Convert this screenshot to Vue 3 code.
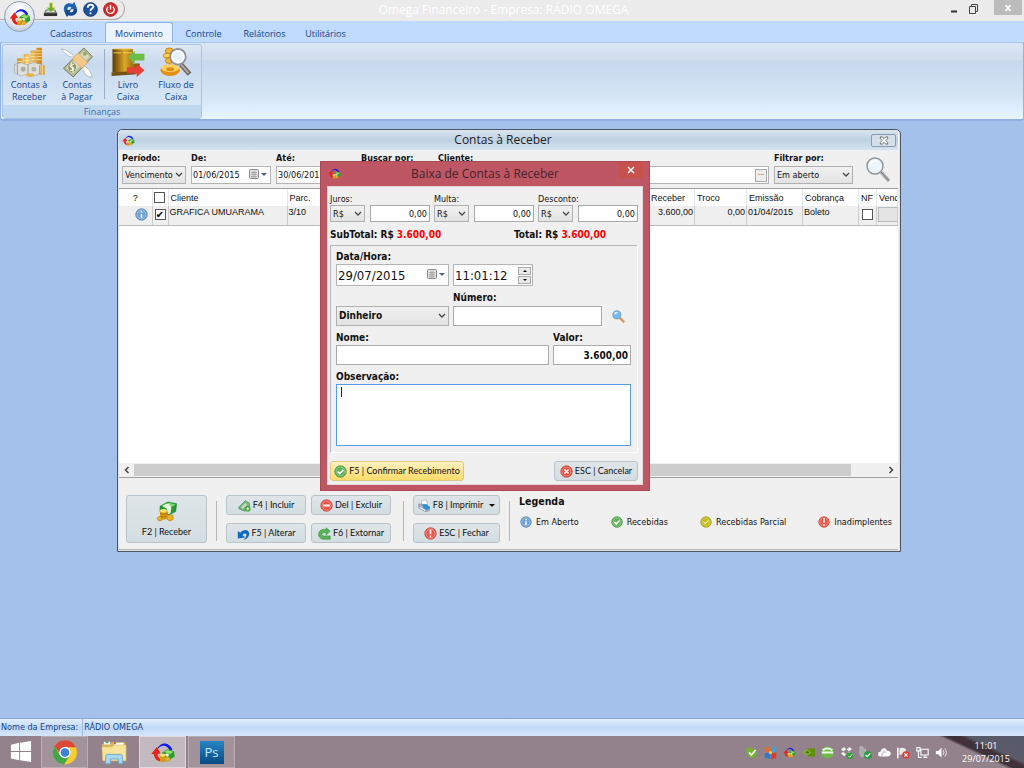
<script setup>
import { ref } from 'vue'

const tabs = ['Cadastros', 'Movimento', 'Controle', 'Relátorios', 'Utilitários']
const quick = [
  { icon: 'i-save', label: 'Salvar' },
  { icon: 'i-refresh', label: 'Atualizar' },
  { icon: 'i-help', label: 'Ajuda' },
  { icon: 'i-power', label: 'Sair' },
]
const tools = [
  { icon: 'i-coins', top: 'Contas à', bottom: 'Receber' },
  { icon: 'i-money', top: 'Contas', bottom: 'à Pagar' },
  { icon: 'i-book', top: 'Livro', bottom: 'Caixa' },
  { icon: 'i-flow', top: 'Fluxo de', bottom: 'Caixa' },
]
const legend = [
  { icon: 'i-info', label: 'Em Aberto' },
  { icon: 'i-ok', label: 'Recebidas' },
  { icon: 'i-part', label: 'Recebidas Parcial' },
  { icon: 'i-warn', label: 'Inadimplentes' },
]
const charges = ['Juros', 'Multa', 'Desconto']
const tray = ['t-shield', 't-win', 'i-logo', 't-nvidia', 't-globe', 't-dropbox', 't-usb', 't-cloud', 't-flag', 't-net', 't-sound']
const allRows = ref(false)
const rowOn = ref(true)
const note = ref('')
</script>

<template>
  <div class="screen">
    <svg class="defs" aria-hidden="true">
      <defs>
        <linearGradient id="gold" x1="0" x2="1"><stop offset="0" stop-color="#e98b0c" /><stop offset=".45" stop-color="#ffd667" /><stop offset="1" stop-color="#d57a08" /></linearGradient>
        <linearGradient id="brown" x1="0" x2="1"><stop offset="0" stop-color="#5d3a03" /><stop offset=".45" stop-color="#e0a828" /><stop offset="1" stop-color="#6b4505" /></linearGradient>
      </defs>
      <symbol id="i-logo" viewBox="0 0 32 32">
        <path d="M8 13C11 3 23 1 28 12l-3 2C21 6 14 5 8 13z" fill="#1420e0" />
        <path d="M1 18L8 9l5 8-4 1c0 4 3 7 9 9-8 2-13-2-14-9z" fill="#e8211b" />
        <path d="M15 16l6-4 9 2 1 7-6 4-10-3z" fill="#2f9f28" />
        <path d="M17 15l5-2 7 2-4 3z" fill="#94e070" /><path d="M18 19l3-2 3 2-2 3z" fill="#e9f7da" />
        <path d="M12 19q4-3 7 0v8q-4 3-7 0z" fill="#d49d1c" /><ellipse cx="15.500" cy="19.500" rx="3.500" ry="1.800" fill="#ffe47a" />
        <path d="M18 23q4-3 7 0v3q-4 3-7 0z" fill="#e3b12d" stroke="#a97b12" stroke-width=".5" />
      </symbol>
      <symbol id="i-save" viewBox="0 0 16 16">
        <path d="M3 8h10l2 4v3H1v-3z" fill="#777" /><path d="M1 12h14v3H1z" fill="#333" /><path d="M4 9h8l1 2H3z" fill="#ddd" />
        <path d="M7 1h3v5h3L8.500 11 4 6h3z" fill="#5fb32a" stroke="#e3d34a" stroke-width=".6" />
      </symbol>
      <symbol id="i-refresh" viewBox="0 0 16 16">
        <path d="M1 9C0 3 5 0 10 2l2-2 3 7-8 1 2-2C7 4 4 5 5 9z" fill="#1d62ae" />
        <path d="M15 7c1 6-4 9-9 7l-2 2-3-7 8-1-2 2c2 2 5 1 4-3z" fill="#164b8c" />
      </symbol>
      <symbol id="i-help" viewBox="0 0 16 16">
        <circle cx="8" cy="8" r="7.300" fill="#1c519b" stroke="#0d3370" /><path d="M5 6c0-4 6-4 6-1 0 2-3 2-3 4.500" fill="none" stroke="#fff" stroke-width="2" /><circle cx="8" cy="12" r="1.200" fill="#fff" />
      </symbol>
      <symbol id="i-power" viewBox="0 0 16 16">
        <circle cx="8" cy="8" r="7.300" fill="#d92a2a" stroke="#a11616" /><path d="M5.500 5a4 4 0 1 0 5 0M8 3v5" fill="none" stroke="#fff" stroke-width="1.500" />
      </symbol>
      <symbol id="i-coins" viewBox="0 0 32 32">
        <path d="M4 12h5v14H4zM11 8h5v18h-5zM18 4h5v22h-5zM24 1h5v25h-5z" fill="url(#gold)" stroke="#d68616" stroke-width=".5" />
        <path d="M4 15h5M4 18h5M11 11h5M11 14h5M11 17h5M18 7h5M18 10h5M18 13h5M18 16h5M24 4h5M24 7h5M24 10h5M24 13h5" stroke="#fff0a6" stroke-width=".8" />
        <path d="M1 18l7-2 6 2 7-2 8 2v9l-8 3-7-2-6 2-7-3z" fill="#dededb" stroke="#999" stroke-width=".6" />
        <circle cx="10" cy="23" r="2.500" fill="#aaaaa7" /><circle cx="21" cy="23" r="2.500" fill="#b0b0ac" /><path d="M4 18v10M15 18v10M27 19v9" stroke="#999" />
        <ellipse cx="17" cy="29" rx="4" ry="2" fill="#e9b13c" /><path d="M28 19h4v10h-4z" fill="url(#gold)" />
      </symbol>
      <symbol id="i-money" viewBox="0 0 32 32">
        <path d="M12 8C8 7 6 2 0 2c2 2 2 4 5 5-1 1 2 2 5 3" fill="#fff" stroke="#a8adb5" stroke-width=".8" />
        <path d="M23 20c5 1 6 4 9 11-4 0-8-1-9-7" fill="#fff" stroke="#a8adb5" stroke-width=".8" />
        <path d="M2 22L23 1l9 9-20 21z" fill="#b7bd96" stroke="#767b5c" />
        <path d="M5 22L23 4l6 6-17 17z" fill="#d8dbbf" /><path d="M11 12l6-6 10 10-6 6z" fill="#f2c98b" stroke="#d39a55" stroke-width=".6" />
        <ellipse cx="11" cy="21" rx="4" ry="5" fill="#8b9369" /><path d="M13 18c-5-1-5 3-2 3s2 4-2 3M10 16l2 10" fill="none" stroke="#f5f4db" stroke-width="1.200" /><circle cx="24" cy="7" r="2" fill="#90ad5f" />
      </symbol>
      <symbol id="i-book" viewBox="0 0 36 32">
        <path d="M2 2h10v24H2zM12 2h11v24H12zM22 17h8v10h-8z" fill="url(#brown)" />
        <path d="M1 26l22-1 4 3-26 2z" fill="#745012" /><path d="M3 2h19M3 6h8M13 6h9" stroke="#f2ce5b" />
        <path d="M18 10l7-6v3h10v7H25v4z" fill="#6bbd48" /><path d="M17 21h10v-4l8 7-8 7v-4H17z" fill="#e64038" />
      </symbol>
      <symbol id="i-flow" viewBox="0 0 32 32">
        <ellipse cx="9" cy="4" rx="4" ry="3" fill="#f3b73a" stroke="#c97f0c" /><ellipse cx="7" cy="9" rx="4" ry="2.500" fill="#ffd25a" stroke="#c97f0c" /><ellipse cx="9" cy="14" rx="4" ry="3" fill="#f3b73a" stroke="#c97f0c" />
        <ellipse cx="10" cy="24" rx="10" ry="6" fill="#e48e0c" /><ellipse cx="10" cy="22" rx="9" ry="4" fill="#ffd05a" /><ellipse cx="10" cy="23" rx="4" ry="2" fill="#dc8b14" />
        <path d="M21 18l9 10" stroke="#6f645f" stroke-width="5" /><path d="M21 18l8 9" stroke="#b6aaa1" stroke-width="2" />
        <circle cx="18" cy="10" r="8" fill="#e9f1f8" stroke="#8f8f91" stroke-width="2" /><circle cx="18" cy="10" r="6" fill="none" stroke="#fff" stroke-width="2" />
      </symbol>
      <symbol id="i-info" viewBox="0 0 16 16"><circle cx="8" cy="8" r="7" fill="#71a1d2" stroke="#4479b3" /><circle cx="8" cy="8" r="5.500" fill="none" stroke="#a8c8e8" /><path d="M8 4v1.500M8 7v5" stroke="#fff" stroke-width="2" /></symbol>
      <symbol id="i-ok" viewBox="0 0 16 16"><circle cx="8" cy="8" r="7" fill="#5db159" stroke="#348c35" /><circle cx="8" cy="8" r="5.500" fill="none" stroke="#9bd497" /><path d="M4.500 8l2.500 2.500L11.500 6" fill="none" stroke="#fff" stroke-width="2" /></symbol>
      <symbol id="i-part" viewBox="0 0 16 16"><circle cx="8" cy="8" r="7" fill="#c3bd20" stroke="#96921b" /><circle cx="8" cy="8" r="5.500" fill="none" stroke="#d8d255" /><path d="M4.500 8l2.500 2L11.500 6" fill="none" stroke="#f5f0b0" stroke-width="1.500" /></symbol>
      <symbol id="i-warn" viewBox="0 0 16 16"><circle cx="8" cy="8" r="7" fill="#ec5548" stroke="#d1392f" /><circle cx="8" cy="8" r="5.500" fill="none" stroke="#f79b90" /><path d="M8 3v6M8 10.500v2" stroke="#fff" stroke-width="2" /></symbol>
      <symbol id="i-cancel" viewBox="0 0 16 16"><circle cx="8" cy="8" r="7" fill="#e65346" stroke="#c8372e" /><circle cx="8" cy="8" r="5.500" fill="none" stroke="#f49187" /><path d="M5.500 5.500l5 5M10.500 5.500l-5 5" stroke="#fff" stroke-width="2" /></symbol>
      <symbol id="i-minus" viewBox="0 0 16 16"><circle cx="8" cy="8" r="7" fill="#e8564b" stroke="#cc3930" /><circle cx="8" cy="8" r="5.500" fill="none" stroke="#f49187" /><path d="M4 8h8" stroke="#fff" stroke-width="2.500" /></symbol>
      <symbol id="i-add" viewBox="0 0 16 16"><path d="M1 10l8-8 5 3v7l-6 3-7-3z" fill="#81b583" stroke="#579560" /><path d="M4 10l5-5 2 2-5 5z" fill="#c7dfc1" /><circle cx="12" cy="12" r="3.500" fill="#43a641" /><path d="M12 10v4M10 12h4" stroke="#fff" /></symbol>
      <symbol id="i-undo" viewBox="0 0 16 16"><path d="M1 5l3 2C8 2 15 3 15 8c0 4-3 7-7 8 4-4 5-8 2-8-2 0-3 1-3 2l3 3-9 1z" fill="#1268c1" /></symbol>
      <symbol id="i-redo" viewBox="0 0 16 16"><path d="M15 5L10 1v2H6C-1 4-1 14 6 15h9v-4H7c-3 0-3-4 0-4h3v3z" fill="#58b557" stroke="#34893b" stroke-width=".7" /></symbol>
      <symbol id="i-print" viewBox="0 0 16 16"><path d="M4 2l6-1 2 6-7 2z" fill="#fff" stroke="#9ba4ad" stroke-width=".7" /><path d="M1 6l8 1 5 3v4l-4 2-9-5z" fill="#adb8c3" stroke="#6d7984" stroke-width=".7" /><path d="M5 7l5-1 5 4-2 3-5 1z" fill="#2e8fda" /><path d="M2 10l7 3v2l-7-4z" fill="#f7f7f7" /></symbol>
      <symbol id="i-cash" viewBox="0 0 24 24"><path d="M4 6l9-5 10 2-1 9-8 4-10-3z" fill="#219b33" stroke="#18742a" stroke-width=".6" /><path d="M6 5l8-3 8 2-7 4z" fill="#81db70" /><path d="M11 3l4 1 2 4-1 6-3 1-1-6-5-3z" fill="#e7f6da" /><path d="M4 11v9q4 3 8 0v-9q-4 3-8 0" fill="#d79814" /><ellipse cx="8" cy="11" rx="4" ry="2" fill="#ffe16b" /><path d="M4 14q4 3 8 0M4 17q4 3 8 0" fill="none" stroke="#8b5c05" stroke-width=".6" /><path d="M1 19q2-3 5 0v3q-3 2-5-1zM12 17q5-3 7 0v4q-4 3-7 0z" fill="#eab12a" stroke="#a77008" stroke-width=".6" /></symbol>
      <symbol id="i-lens" viewBox="0 0 28 28"><circle cx="11" cy="10" r="8" fill="#edf5fb" stroke="#8c949b" stroke-width="1.500" /><path d="M6 9q2-5 7-4" fill="none" stroke="#fff" stroke-width="2" /><path d="M17 16l8 9" stroke="#b2b2b2" stroke-width="3.500" /><path d="M17 16l8 9" stroke="#777" stroke-width="1" /></symbol>
      <symbol id="i-find" viewBox="0 0 16 16"><path d="M9 9l6 6" stroke="#d79a63" stroke-width="3" /><circle cx="6" cy="6" r="5" fill="#74bbef" stroke="#789ab4" /><path d="M3 5q1-2 4-2" stroke="#e7f6ff" fill="none" stroke-width="2" /></symbol>
      <symbol id="i-cal" viewBox="0 0 18 12"><rect x=".5" y=".5" width="9" height="9" rx="1" fill="#e2e2e6" stroke="#888" /><path d="M2 3.500h6M2 5.500h6M2 7.500h6M4 2v7M6 2v7" stroke="#999" stroke-width=".7" /><path d="M12 4h6l-3 3z" fill="#4c6587" /></symbol>
      <symbol id="b-win" viewBox="0 0 24 24"><path d="M1 4l9-2v9H1zM11 2l12-2v11H11zM1 12h9v9l-9-2zM11 12h12v11l-12-2z" fill="#fff" /></symbol>
      <symbol id="b-chrome" viewBox="0 0 24 24"><circle cx="12" cy="12" r="11.500" fill="#f6cc31" /><path d="M2 6A11.500 11.500 0 0 1 22.500 7H12l-5 6z" fill="#dc4638" /><path d="M2 6a11.500 11.500 0 0 0 9 17.500l6-9-10 0z" fill="#41a549" /><circle cx="12" cy="12" r="5.500" fill="#fff" /><circle cx="12" cy="12" r="4.200" fill="#3f82d5" /></symbol>
      <symbol id="b-folder" viewBox="0 0 28 26"><path d="M1 4h9l2-2h14v20H2z" fill="#d8b85f" /><path d="M3 3h7M14 4h10" stroke="#fff" stroke-width="3" /><path d="M5 2h3" stroke="#3caf42" stroke-width="2" /><path d="M14 3h2" stroke="#d74a34" stroke-width="2" /><path d="M1 7h11l2-2h13v17H2z" fill="#f8e49a" stroke="#d8b968" stroke-width=".6" /><path d="M5 25v-8q0-2 2-2h14q2 0 2 2v8h-4v-5h-9v5z" fill="#a9d8f4" stroke="#6ca9d0" /></symbol>
      <symbol id="t-shield" viewBox="0 0 16 16"><path d="M2 2h6v2h6v8l-4 3-5-2-3-4z" fill="#71b629" /><path d="M5 8l3 3 5-6" fill="none" stroke="#fff" stroke-width="2" /></symbol>
      <symbol id="t-win" viewBox="0 0 16 16"><path d="M1 1l7 1v6L1 7z" fill="#e86a2b" /><path d="M9 2l6-1v6l-6 1z" fill="#479bd9" /><path d="M1 9l7-1v8l-7-2z" fill="#2a7dcc" /><path d="M9 9l6-1v7l-6 1z" fill="#e23c25" /><circle cx="8" cy="8" r="2" fill="#f1cf37" /></symbol>
      <symbol id="t-nvidia" viewBox="0 0 16 16"><path d="M7 3h9v10H7z" fill="#5c9300" /><path d="M0 8q6-6 12 0-6 6-12 0" fill="#80ad32" /><path d="M4 8q3-3 5 0-3 2-5 0" fill="#456f08" /></symbol>
      <symbol id="t-globe" viewBox="0 0 16 16"><circle cx="8" cy="8" r="7.500" fill="#6ebc48" /><path d="M1 8h14M2 5q6-4 12 0" stroke="#effbea" stroke-width="2.500" fill="none" /></symbol>
      <symbol id="t-dropbox" viewBox="0 0 16 16"><path d="M1 4l4-3 3 3-4 3zM8 4l4-3 3 3-4 3zM1 9l3-2 4 3-3 3zM8 10l3-3 4 3-3 3z" fill="#f5f5f5" stroke="#777" stroke-width=".5" /><circle cx="12" cy="12" r="4" fill="#2e9e35" /><path d="M10 12l2 2 3-4" fill="none" stroke="#fff" /></symbol>
      <symbol id="t-usb" viewBox="0 0 16 16"><path d="M1 1h4v3h3v6l-3 3H3L1 10z" fill="#a9a9a9" stroke="#ddd" stroke-width=".6" /><circle cx="11" cy="11" r="4.800" fill="#269c40" /><path d="M8 11l2 2 4-4" fill="none" stroke="#fff" stroke-width="1.500" /></symbol>
      <symbol id="t-cloud" viewBox="0 0 16 16"><path d="M3 13a3 3 0 0 1 0-6C4 2 10 1 11 6c6-1 6 7 1 7z" fill="#fff" /><path d="M5 12c-1-4 3-6 5-4" fill="none" stroke="#94848c" /></symbol>
      <symbol id="t-flag" viewBox="0 0 16 16"><path d="M1 2v13" stroke="#fff" stroke-width="2" /><path d="M3 3q5-2 8 1v7q-4-2-8 0z" fill="#e8e8e8" /><circle cx="11" cy="11" r="4.500" fill="#df3c32" /><path d="M9 9l4 4M13 9l-4 4" stroke="#fff" stroke-width="1.500" /></symbol>
      <symbol id="t-net" viewBox="0 0 16 16"><path d="M6 4h9v7H6zM9 14h5M11 11v3M1 2h4v4H1zM3 6v8h4" fill="none" stroke="#fff" stroke-width="1.300" /></symbol>
      <symbol id="t-sound" viewBox="0 0 16 16"><path d="M1 6h3l4-4v12l-4-4H1z" fill="#fff" /><path d="M10 5q2 3 0 6M12 3q4 5 0 10" fill="none" stroke="#fff" /></symbol>
    </svg>

    <header class="ribbon">
      <div class="titlebar">
        <div class="quick">
          <button v-for="q in quick" :key="q.icon" :aria-label="q.label"><svg><use :href="'#' + q.icon" /></svg></button>
        </div>
        <h1>Omega Financeiro - Empresa: RÁDIO OMEGA</h1>
        <div class="caption">
          <button aria-label="Minimizar"><svg viewBox="0 0 12 12"><path d="M3 8.500h6" stroke="#333" stroke-width="2" /></svg></button>
          <button aria-label="Restaurar"><svg viewBox="0 0 12 12"><path d="M3.500 3V1.500h6v7H8M1.500 3.500h6v7h-6z" fill="none" stroke="#444" /></svg></button>
          <button class="x" aria-label="Fechar">x</button>
        </div>
      </div>
      <button class="orb" aria-label="Menu principal"><svg><use href="#i-logo" /></svg></button>
      <nav class="tabs">
        <a v-for="(t, i) in tabs" :key="t" href="#" :class="{ on: i === 1 }">{{ t }}</a>
      </nav>
      <div class="band">
        <section class="group">
          <div class="tools">
            <button v-for="t in tools" :key="t.icon">
              <svg><use :href="'#' + t.icon" /></svg>
              <span>{{ t.top }}</span><span>{{ t.bottom }}</span>
            </button>
          </div>
          <h2>Finanças</h2>
        </section>
      </div>
    </header>

    <main class="desktop">
      <section class="win">
        <div class="wintitle">
          <svg><use href="#i-logo" /></svg>
          <h2>Contas à Receber</h2>
          <button aria-label="Fechar janela"><svg viewBox="0 0 12 10"><path d="M2 1h2l2 2 2-2h2v2L8 5l2 2v2H8L6 7 4 9H2V7l2-2-2-2z" fill="#fff" stroke="#555" stroke-width=".9" /></svg></button>
        </div>
        <form class="filters" @submit.prevent>
          <div class="f period"><label for="per">Período:</label>
            <span class="sel"><select id="per"><option>Vencimento</option></select><svg viewBox="0 0 8 6"><path d="M1 1l3 3 3-3" /></svg></span></div>
          <div class="f date"><label for="de">De:</label>
            <span class="dt"><input id="de" value="01/06/2015"><svg><use href="#i-cal" /></svg></span></div>
          <div class="f date"><label for="ate">Até:</label>
            <span class="dt"><input id="ate" value="30/06/2015"><svg><use href="#i-cal" /></svg></span></div>
          <div class="f by"><label for="por">Buscar por:</label>
            <span class="sel"><select id="por"><option>Cliente</option></select></span></div>
          <div class="f client"><label for="cli">Cliente:</label>
            <span class="dt"><input id="cli"><button type="button" aria-label="Procurar cliente">···</button></span></div>
          <div class="f situation"><label for="fil">Filtrar por:</label>
            <span class="sel"><select id="fil"><option>Em aberto</option></select><svg viewBox="0 0 8 6"><path d="M1 1l3 3 3-3" /></svg></span></div>
          <button class="lens" aria-label="Pesquisar"><svg><use href="#i-lens" /></svg></button>
        </form>

        <div class="gridbox">
          <table>
            <colgroup><col class="c33"><col class="c16"><col class="c119"><col class="c46"><col><col class="c46"><col class="c52"><col class="c56"><col class="c56"><col class="c18"><col class="c21"></colgroup>
            <thead><tr>
              <th class="mid">?</th><th><input v-model="allRows" type="checkbox" aria-label="Selecionar todos"></th><th>Cliente</th><th>Parc.</th><th></th>
              <th>Receber</th><th>Troco</th><th>Emissão</th><th>Cobrança</th><th>NF</th><th>Vend</th>
            </tr></thead>
            <tbody><tr>
              <td class="info"><svg><use href="#i-info" /></svg></td><td><input v-model="rowOn" type="checkbox" aria-label="Selecionar linha"></td><td>GRAFICA UMUARAMA</td><td>3/10</td><td></td>
              <td class="num">3.600,00</td><td class="num">0,00</td><td>01/04/2015</td><td>Boleto</td><td><input type="checkbox" aria-label="NF"></td><td><button class="cell" aria-label="Vendedor"></button></td>
            </tr></tbody>
          </table>
          <div class="scroll">
            <button aria-label="Rolar à esquerda"><svg viewBox="0 0 8 8"><path d="M5.500 1L2.500 4l3 3" /></svg></button>
            <i></i>
            <button aria-label="Rolar à direita"><svg viewBox="0 0 8 8"><path d="M2.500 1l3 3-3 3" /></svg></button>
          </div>
        </div>

        <footer class="actions">
          <button class="btn big"><svg><use href="#i-cash" /></svg>F2 | Receber</button>
          <i class="sep"></i>
          <div class="pairs">
            <button class="btn"><svg><use href="#i-add" /></svg>F4 | Incluir</button>
            <button class="btn"><svg><use href="#i-minus" /></svg>Del | Excluir</button>
            <button class="btn"><svg><use href="#i-undo" /></svg>F5 | Alterar</button>
            <button class="btn"><svg><use href="#i-redo" /></svg>F6 | Extornar</button>
          </div>
          <i class="sep wide"></i>
          <div class="pairs one">
            <button class="btn"><svg><use href="#i-print" /></svg>F8 | Imprimir <b class="drop"></b></button>
            <button class="btn"><svg><use href="#i-warn" /></svg>ESC | Fechar</button>
          </div>
          <i class="sep"></i>
          <section class="legend">
            <h3>Legenda</h3>
            <ul><li v-for="l in legend" :key="l.icon"><svg><use :href="'#' + l.icon" /></svg>{{ l.label }}</li></ul>
          </section>
        </footer>
      </section>

      <section class="dialog" role="dialog" aria-labelledby="dt">
        <div class="dtitle">
          <svg><use href="#i-logo" /></svg>
          <h2 id="dt">Baixa de Contas à Receber</h2>
          <button aria-label="Fechar diálogo"><svg viewBox="0 0 8 8"><path d="M1 1l6 6M7 1L1 7" stroke="#fff" stroke-width="1.500" /></svg></button>
        </div>
        <form class="dbody" @submit.prevent>
          <div class="charges">
            <div v-for="c in charges" :key="c" class="charge">
              <label :for="c">{{ c }}:</label>
              <span class="sel"><select :aria-label="c + ' em'"><option>R$</option></select><svg viewBox="0 0 8 6"><path d="M1 1l3 3 3-3" /></svg></span>
              <input :id="c" class="box" value="0,00">
            </div>
          </div>
          <div class="totals"><p>SubTotal: R$ <em>3.600,00</em></p><p>Total: R$ <em>3.600,00</em></p></div>
          <div class="panel">
            <label for="data">Data/Hora:</label>
            <div class="line">
              <span class="dt when w113"><input id="data" value="29/07/2015"><svg><use href="#i-cal" /></svg></span>
              <span class="dt when w80"><input aria-label="Hora" value="11:01:12">
                <span class="spin"><button type="button" aria-label="Mais"><svg viewBox="0 0 6 4"><path d="M1 3h4L3 1z" /></svg></button><button type="button" aria-label="Menos"><svg viewBox="0 0 6 4"><path d="M1 1h4L3 3z" /></svg></button></span></span>
            </div>
            <div class="line numrow">
              <span class="sel pay w113"><select aria-label="Forma de pagamento"><option>Dinheiro</option></select><svg viewBox="0 0 8 6"><path d="M1 1l3 3 3-3" /></svg></span>
              <div class="w149"><label for="num">Número:</label><input id="num" class="box"></div>
              <button type="button" class="find" aria-label="Localizar"><svg><use href="#i-find" /></svg></button>
            </div>
            <div class="line names">
              <div class="grow"><label for="nome">Nome:</label><input id="nome" class="box"></div>
              <div class="w78"><label for="valor">Valor:</label><input id="valor" class="box val" value="3.600,00"></div>
            </div>
            <label for="obs">Observação:</label>
            <div class="note"><textarea id="obs" v-model="note"></textarea><i></i></div>
          </div>
          <div class="dbuttons">
            <button class="btn gold"><svg><use href="#i-ok" /></svg>F5 | Confirmar Recebimento</button>
            <button type="button" class="btn"><svg><use href="#i-cancel" /></svg>ESC | Cancelar</button>
          </div>
        </form>
      </section>
    </main>

    <div class="statusbar"><span>Nome da Empresa:</span><span>RÁDIO OMEGA</span></div>

    <footer class="taskbar">
      <button class="start" aria-label="Iniciar"><svg><use href="#b-win" /></svg></button>
      <button class="task open" aria-label="Chrome"><svg><use href="#b-chrome" /></svg></button>
      <button class="task" aria-label="Arquivos"><svg><use href="#b-folder" /></svg></button>
      <button class="task open on" aria-label="Omega"><svg><use href="#i-logo" /></svg></button>
      <button class="task open" aria-label="Photoshop"><span class="ps">Ps</span></button>
      <div class="tray"><svg v-for="t in tray" :key="t"><use :href="'#' + t" /></svg></div>
      <div class="clock"><span>11:01</span><span>29/07/2015</span></div>
    </footer>
  </div>
</template>

<style>
body { margin: 0; }
</style>

<style scoped>
.screen { --ui: "Open Sans", "Noto Sans", sans-serif; --tah: "DejaVu Sans Condensed", "DejaVu Sans", sans-serif; --ms: "Liberation Sans", sans-serif; display: flex; flex-direction: column; min-height: 100vh; font: 9px/12px var(--tah); color: #111; background: #a3c1ea; overflow: hidden; }
.screen * { box-sizing: border-box; }
.defs { position: absolute; width: 0; height: 0; }
button, input, select, textarea { font: inherit; color: inherit; margin: 0; padding: 0; border: 0; background: none; border-radius: 0; outline: 0; }
h1, h2, h3, p, ul { margin: 0; padding: 0; font-weight: inherit; list-style: none; }
svg { display: block; flex: none; }

.ribbon { position: relative; }
.titlebar { display: flex; align-items: flex-start; height: 21px; background: #ebebeb; }
.quick { display: flex; align-items: center; gap: 5px; height: 20px; width: 125px; padding-left: 43px; border: 1px solid #aaa; border-width: 0 1px 1px 0; border-radius: 0 9px 12px 0; }
.quick svg { width: 15px; height: 15px; }
h1 { flex: 1; text-align: center; font: 12px/20px var(--ui); color: #fff; padding-right: 62px; }
.caption { display: flex; width: 80px; }
.caption button { width: 20px; height: 15px; padding: 2px 4px 0; }
.caption svg { width: 12px; height: 12px; }
.caption .x { flex: 0 0 28px; margin: 0 11px 0 auto; padding: 0 0 2px; background: #bcbcbc; color: #fff; font: bold 11px/12px var(--ui); margin-right: 2px; }
.orb { position: absolute; left: 4px; top: 1px; width: 31px; height: 31px; border-radius: 50%; border: 1px solid #8d9bb2; background: radial-gradient(circle at 50% 30%, #fff, #e1e6ed 60%, #a8b3c5); display: grid; place-items: center; }
.orb svg { width: 22px; height: 22px; }
.tabs { display: flex; height: 21px; padding: 1px 0 0 37px; background: #bfdbff; font: 9px/23px var(--ui); }
.tabs a { color: #15428b; text-decoration: none; width: 68px; text-align: center; }
.tabs a:nth-child(n+3) { width: 61px; }
.tabs .on { border: 1px solid #8fb4e5; border-bottom: 0; border-radius: 3px 3px 0 0; background: #eaf3fe; line-height: 21px; }
.band { border: 1px solid #8fb4e5; border-top-color: #a9c8ee; border-radius: 3px; padding: 1px; height: 79px; background: linear-gradient(#dbe6f4 0, #cfdded 22%, #c6d8ec 24%, #d4e5f6 70%, #e7f5ff); border-bottom: 2px solid #8fb0e0; }
.group { width: 200px; height: 75px; border: 1px solid #a8c4e5; border-radius: 3px; display: flex; flex-direction: column; background: linear-gradient(#dde8f5 0, #c9daee 25%, #dcebf9); }
.tools { display: flex; flex: 1; padding-left: 2px; }
.tools button { width: 48px; font: 9px/12px var(--ui); display: flex; flex-direction: column; align-items: center; padding-top: 2px; color: #15428b; }
.tools button:nth-child(3) { margin-left: 3px; background: linear-gradient(#9aafc9, #9aafc9) left 4px / 1px 50px no-repeat; }
.tools svg { width: 36px; height: 31px; margin-bottom: 1px; }
.group h2 { font: 9px/13px var(--ui); text-align: center; color: #3e6aaa; background: #c1d8f1; }

.desktop { flex: 1; position: relative; min-height: 597px; background: #a3c1ea; }
.win { position: absolute; left: 117px; right: 123px; top: 8px; border: 1px solid #4c555f; border-radius: 5px 5px 0 0; background: #f0f0f0; box-shadow: inset 0 0 0 1px #dfe6ed; padding: 0 2px 1px 1px; }
.wintitle { display: flex; align-items: center; height: 20px; padding: 0 2px 0 3px; background: linear-gradient(#d9e5f0, #bfd1e2 50%, #d4e3f1); border-radius: 4px 4px 0 0; }
.wintitle > svg { width: 13px; height: 13px; }
.wintitle h2 { flex: 1; font: 12px/20px var(--ui); text-align: center; color: #222; }
.wintitle button { width: 25px; height: 13px; border: 1px solid #8b9bae; border-radius: 2px; background: #d6e0eb; display: grid; place-items: center; }
.wintitle button svg { width: 12px; height: 9px; }
.filters { display: flex; gap: 5px; height: 38px; padding: 2px 0 0 3px; }
.f label { display: block; font-weight: bold; line-height: 13px; white-space: nowrap; }
.period { width: 64px; } .date { width: 80px; } .by { width: 72px; } .client { flex: 1; } .situation { width: 79px; }
.f .sel, .f .dt { height: 18px; margin-top: 1px; }
.sel { position: relative; display: flex; align-items: center; border: 1px solid #b0b0b0; background: linear-gradient(#f1f1f1, #e3e3e3); }
.sel select { appearance: none; width: 100%; height: 100%; padding-left: 2px; }
.sel svg { position: absolute; right: 2px; width: 8px; height: 6px; pointer-events: none; }
.sel path { fill: none; stroke: #444; stroke-width: 1.300; }
.dt { display: flex; align-items: center; border: 1px solid #b4b4b4; background: #fff; }
.dt input { flex: 1; min-width: 0; width: 0; height: 100%; padding-left: 1px; }
.dt > svg { width: 18px; height: 12px; margin-right: 3px; }
.client button { width: 12px; height: 13px; margin-right: 1px; border: 1px solid #aaa; background: #eee; font-size: 7px; line-height: 9px; }
.lens { width: 40px; display: grid; place-items: center; }
.lens svg { width: 28px; height: 28px; }

.gridbox { border: 1px solid #a0a0a0; border-width: 1px 0; background: #fff; height: 290px; display: flex; flex-direction: column; overflow: hidden; }
table { table-layout: fixed; width: 100%; border-collapse: collapse; font: 9px/12px var(--ms); }
.c33 { width: 33px; } .c16 { width: 16px; } .c119 { width: 119px; } .c46 { width: 46px; } .c52 { width: 52px; } .c56 { width: 56px; } .c18 { width: 18px; } .c21 { width: 21px; }
th { height: 17px; padding: 0 2px; text-align: left; font-weight: normal; border-right: 1px solid #e3e8ee; white-space: nowrap; overflow: hidden; }
th:last-child { padding-right: 0; }
th.mid { text-align: center; }
td { height: 19px; padding: 0 1px; vertical-align: top; background: #efefef; border-right: 1px solid #ccc; border-bottom: 1px solid #bbb; white-space: nowrap; }
td.num { text-align: right; }
td.info { padding: 2px 4px 0 0; }
.info svg { width: 13px; height: 13px; margin-left: auto; }
table input { appearance: none; display: block; width: 11px; height: 11px; margin: 0 auto; border: 1px solid #555; background: #fff; }
th input { margin-left: -1px; }
td input { margin-top: 3px; }
table input:checked::after { content: "✔"; display: block; font: 10px/9px "DejaVu Sans", sans-serif; text-align: center; color: #000; }
.cell { width: 20px; height: 15px; border: 1px solid #bbb; background: #e5e5e5; display: block; margin-top: 1px; }
.scroll { margin-top: auto; height: 14px; display: flex; align-items: center; background: #f0f0f0; }
.scroll button { width: 15px; height: 14px; display: grid; place-items: center; }
.scroll svg { width: 8px; height: 8px; }
.scroll path { fill: none; stroke: #444; stroke-width: 1.500; }
.scroll i { flex: 1; height: 12px; background: #cdcdcd; margin-right: 32px; }

.actions { display: flex; align-items: flex-start; gap: 9px; padding: 17px 0 6px 7px; border-bottom: 1px solid #b7b7b7; }
.btn { display: flex; align-items: center; justify-content: center; gap: 2px; height: 20px; border: 1px solid #b8c3ca; border-radius: 3px; background: linear-gradient(#dfe5e8, #d3dde1); font: 9px/12px Lato, "Open Sans", sans-serif; white-space: nowrap; }
.btn svg { width: 13px; height: 13px; }
.btn.big { flex-direction: column; width: 81px; height: 48px; gap: 4px; }
.big svg { width: 24px; height: 21px; }
.sep { width: 1px; height: 40px; margin-top: 6px; background: #b5b5b5; }
.sep.wide { margin-left: 3px; }
.pairs { display: grid; grid-template-columns: 80px 80px; gap: 8px 5px; }
.pairs.one { grid-template-columns: 87px; }
.drop { border: 3px solid transparent; border-top-color: #111; border-bottom: 0; margin-left: 4px; }
.legend { flex: 1; }
.legend h3 { font-weight: bold; }
.legend ul { display: flex; justify-content: space-between; padding: 9px 6px 0 1px; }
.legend li { display: flex; align-items: center; gap: 4px; white-space: nowrap; }
.legend svg { width: 12px; height: 12px; }

.dialog { position: absolute; left: 320px; top: 40px; width: 330px; padding: 0 6px 5px; background: #be5763; border: 1px solid #a84b56; }
.dtitle { display: flex; align-items: flex-start; height: 24px; }
.dtitle > svg { width: 13px; height: 13px; margin: 5px 0 0 1px; }
.dtitle h2 { flex: 1; font: 12px/24px var(--ui); text-align: center; color: #43232c; padding-left: 10px; }
.dtitle button { width: 24px; height: 16px; background: #c8504d; display: grid; place-items: center; }
.dtitle button svg { width: 8px; height: 8px; }
.dbody { background: #f0f0f0; padding: 6px 4px 3px 2px; border: 1px solid #e7d4d6; }
.charges { display: grid; grid-template-columns: 1fr 1fr 1fr; gap: 4px; }
.charge { display: grid; grid-template-columns: 35px 1fr; column-gap: 5px; }
.charge label { grid-column: 1 / 3; line-height: 12px; }
.charge .sel, .charge .box { height: 17px; }
.box { width: 100%; border: 1px solid #aaa; background: #fff; text-align: right; padding: 0 2px; }
.totals { display: grid; grid-template-columns: 184px 1fr; font: bold 10px/14px var(--tah); padding: 6px 0 3px; }
.totals em { font-style: normal; color: #f00; }
.panel { border: 1px solid #b5b5b5; border-right-color: #fff; border-bottom-color: #fff; padding: 4px 6px 6px 5px; font-weight: bold; font-size: 10px; }
.panel label { display: block; line-height: 13px; }
.line { display: flex; gap: 4px; align-items: flex-end; }
.when { height: 22px; font: 13px/20px var(--tah); margin-top: 1px; }
.w113 { width: 113px; } .w80 { width: 80px; } .w149 { width: 149px; } .w78 { width: 78px; } .grow { flex: 1; }
.spin { width: 13px; margin-right: 1px; display: grid; gap: 1px; }
.spin button { height: 8px; border: 1px solid #aaa; background: #e9e9e9; display: grid; place-items: center; }
.spin svg { width: 6px; height: 4px; }
.numrow { margin-top: 5px; }
.panel .box, .pay { display: flex; height: 20px; }
.numrow label { padding-bottom: 2px; }
.find { width: 20px; height: 20px; margin-left: 2px; display: grid; place-items: center; }
.find svg { width: 13px; height: 13px; }
.names { margin: 5px 0; }
.names label { padding-bottom: 1px; }
.note { position: relative; padding-top: 1px; }
.note textarea { display: block; width: 100%; height: 62px; resize: none; border: 1px solid #569de5; background: #fff; padding: 3px; font-weight: normal; }
.note i { position: absolute; left: 5px; top: 4px; width: 1px; height: 10px; background: #222; }
.dbuttons { display: flex; justify-content: space-between; margin-top: 8px; }
.dbuttons .btn { width: 84px; }
.dbuttons .gold { width: 134px; background: linear-gradient(#fff1c0, #ffdc69); border-color: #dcc68a; }

.statusbar { display: flex; height: 18px; border-top: 1px solid #86a8d7; background: linear-gradient(#e1eefc, #c1d9f6 50%, #d4e6fb); color: #15428b; font: 9px/17px var(--tah); }
.statusbar span { padding: 0 4px 0 1px; border-right: 1px solid #9cb9df; }
.statusbar span:last-child { border: 0; }
.taskbar { display: flex; height: 32px; background: linear-gradient(25deg, transparent 52%, #3d3138 56%, #42323a 64%, #5b5a69 68%, #555b6c 100%) right / 110px 100% no-repeat, #93828b; align-items: stretch; }
.start { width: 41px; display: grid; place-items: center; }
.start svg { width: 22px; height: 22px; }
.task { width: 47px; margin-right: 2px; display: grid; place-items: center; border: 1px solid transparent; }
.task.open { background: #a2939b; border-color: #b8adb3; }
.task.on { background: #c3bac0; border-color: #ddd8db; }
.task svg { width: 26px; height: 25px; }
.ps { width: 24px; height: 23px; background: linear-gradient(#2686c4, #0a4b84); color: #cbecff; font: 13px/22px var(--ui); }
.tray { display: flex; align-items: center; gap: 6px; margin-left: auto; }
.tray svg { width: 13px; height: 13px; }
.clock { width: 76px; display: flex; flex-direction: column; justify-content: center; align-items: center; font: 9px/13px var(--ui); color: #fff; }
</style>
